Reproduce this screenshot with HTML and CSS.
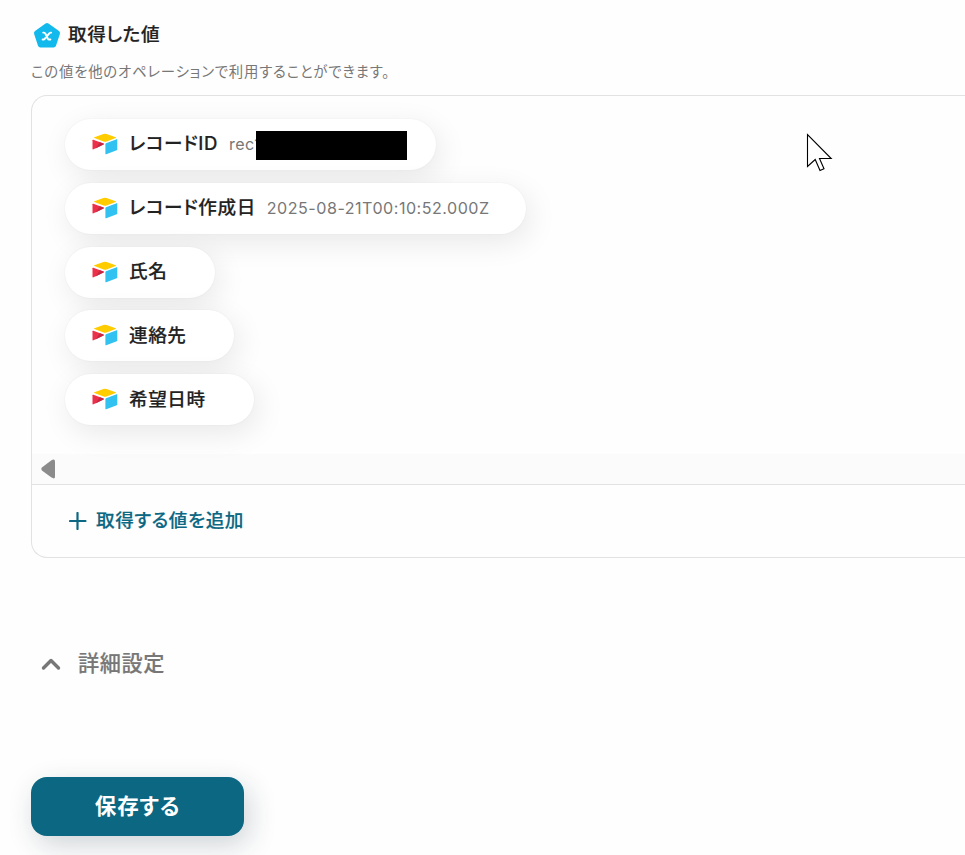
FILE: index.html
```html
<!DOCTYPE html>
<html lang="ja">
<head>
<meta charset="utf-8">
<title>取得した値</title>
<link rel="stylesheet" href="styles.css">
</head>
<body>
<svg class="defs" width="0" height="0" aria-hidden="true">
  <symbol id="base" viewBox="0 0 26 22">
    <path fill="#fc0" d="M11.400 1Q13 .3 14.600 1L23.700 4.300Q24.600 4.700 23.700 5.100L14.500 8.500Q13 9 11.500 8.500L2.400 5.100Q1.500 4.700 2.400 4.300Z"/>
    <path fill="#31c2f2" d="M13.400 11.100Q13.400 10.500 14 10.200L24.700 6.200Q25.300 5.900 25.300 6.700V16.500Q25.300 17.100 24.700 17.300L14.200 21.300Q13.400 21.500 13.400 20.800Z"/>
    <path fill="#ed3049" d="M.5 7.300Q.5 6.400 1.300 6.700L11.500 10.600Q12.200 11.100 11.500 11.500L1.500 16.300Q.5 16.700.5 15.800Z"/>
    <path fill="#c62842" d="M7.800 9.200L11.500 10.600Q12.200 11.100 11.500 11.500L3.500 15.400Z"/>
  </symbol>
</svg>
<main class="page">
  <header class="heading">
    <svg class="logo" width="28" height="28" viewBox="0 0 28 28">
      <path fill="#11b9ec" stroke="#11b9ec" stroke-width="5" stroke-linejoin="round" d="M14 3.500L24.500 11.100 20.600 22.900H7.400L3.500 11.100Z"/>
      <path fill="none" stroke="#fff" stroke-width="1.900" stroke-linecap="round" stroke-linejoin="round" d="M10.200 10.600h.8q.9 0 1.400 1l2.300 4.900q.5 1 1.400 1h1.300M18.200 10.600h-.5q-.8 0-1.400.8l-4.400 5.300q-.6.800-1.400.8h-.9"/>
    </svg>
    <h1>取得した値</h1>
  </header>
  <p class="note">この値を他のオペレーションで利用することができます。</p>
  <section class="panel">
    <div class="values">
      <div class="chip chip-id"><svg class="base"><use href="#base"/></svg><b>レコードID</b><span class="value">rec1</span><span class="redaction"></span></div>
      <div class="chip chip-created"><svg class="base"><use href="#base"/></svg><b>レコード作成日</b><span class="value">2025-08-21T00:10:52.000Z</span></div>
      <div class="chip chip-name"><svg class="base"><use href="#base"/></svg><b>氏名</b></div>
      <div class="chip chip-contact"><svg class="base"><use href="#base"/></svg><b>連絡先</b></div>
      <div class="chip chip-date"><svg class="base"><use href="#base"/></svg><b>希望日時</b></div>
    </div>
    <div class="scrollbar"><svg width="15" height="20" viewBox="0 0 15 20"><path fill="#8b8b8b" d="M10.500 1.200Q14 -.6 14 2.500V17.500Q14 20.600 10.500 18.600L1.200 11.700Q-.6 10 1.200 8.300Z"/></svg></div>
    <div class="add"><svg width="18" height="18" viewBox="0 0 18 18"><path fill="none" stroke="#0b6782" stroke-width="2.200" stroke-linecap="round" d="M8.500 1v16M1 9h15.500"/></svg><span>取得する値を追加</span></div>
  </section>
  <div class="details"><svg width="20" height="14" viewBox="0 0 20 14"><path fill="none" stroke="#777" stroke-width="3.400" stroke-linecap="round" stroke-linejoin="round" d="M2.500 11L10 3.500 17.500 11"/></svg><span>詳細設定</span></div>
  <button class="save">保存する</button>
</main>
<svg class="cursor" width="28" height="40" viewBox="0 0 28 40"><path fill="#fff" stroke="#000" stroke-width="1.100" d="M1.500 1.500V33.500L9.200 26.500 14 37.500 18 35.800 13.500 25.500H25.200Z"/></svg>
</body>
</html>
```
FILE: styles.css
```css
* { box-sizing: border-box; }
body {
  margin: 0;
  height: 855px;
  overflow: hidden;
  background: #fefefe;
  color: #222;
  font-family: Inter, "Noto Sans CJK JP", sans-serif;
  font-feature-settings: "palt";
}
.defs { position: absolute; }
.page { padding: 19px 0 0 31px; }
.heading { display: flex; align-items: center; height: 30px; }
.logo { margin: 3px 7px 0 2px; }
h1, .chip b, .add, .details {
  font-weight: 500;
  -webkit-text-stroke: .18px currentColor;
}
h1 { margin: 0; font-size: 18.600px; line-height: 30px; letter-spacing: .56px; }
.note { margin: 12px 0 0; height: 34px; font-size: 14.400px; line-height: 21px; color: #777; letter-spacing: .79px; }
.panel {
  height: 463px;
  border: 1px solid #e2e2e2;
  border-right: 0;
  border-radius: 16px 0 0 16px;
  overflow: hidden;
}
.values { display: flex; flex-direction: column; align-items: flex-start; gap: 12.800px; height: 358px; padding: 23px 0 0 33px; }
.chip {
  display: flex;
  align-items: center;
  height: 51px;
  flex: none;
  padding-left: 26.500px;
  border-radius: 26px;
  background: #fff;
  box-shadow: 4px 8px 30px rgba(0, 0, 0, .09), 0 0 2px rgba(0, 0, 0, .06);
  white-space: nowrap;
}
.chip b { margin: -2px 0 0 11.500px; font-size: 18.600px; line-height: 28px; letter-spacing: .56px; }
.base { width: 26px; height: 22px; flex: none; margin-top: -1px; }
.value { margin: -1px 0 0 11px; font-size: 16.100px; color: #777; letter-spacing: .5px; }
.chip-id { width: 371px; }
.chip-id b { margin-top: -3px; }
.chip-id .value { width: 27px; }
.redaction { position: relative; width: 151px; height: 29px; margin-top: 2px; background: #000; }
.chip-created { width: 461px; }
.chip-name { width: 150px; }
.chip-contact { width: 169px; }
.chip-date { width: 189px; }
.scrollbar { display: flex; align-items: center; height: 31px; padding-left: 9px; background: #fbfbfb; border-bottom: 1px solid #e2e2e2; }
.add { display: flex; align-items: center; height: 72px; padding-left: 37px; gap: 9px; color: #0b6782; font-size: 18.600px; letter-spacing: .54px; }
.add span { margin-top: -5px; }
.details { display: flex; align-items: center; height: 40px; margin-top: 86px; padding-left: 10px; gap: 17px; font-size: 21.200px; color: #777; letter-spacing: .6px; }
.details span { margin-top: -5px; }
.save {
  display: block;
  width: 213px;
  height: 59px;
  margin-top: 93px;
  padding: 0 0 4px;
  border: 0;
  border-radius: 16px;
  background: #0b6782;
  color: #fff;
  box-shadow: 5px 9px 28px rgba(20, 45, 60, .2);
  font: 700 21.500px Inter, "Noto Sans CJK JP", sans-serif;
  font-feature-settings: "palt";
  letter-spacing: .8px;
}
.cursor { position: absolute; left: 806px; top: 133px; }
```
